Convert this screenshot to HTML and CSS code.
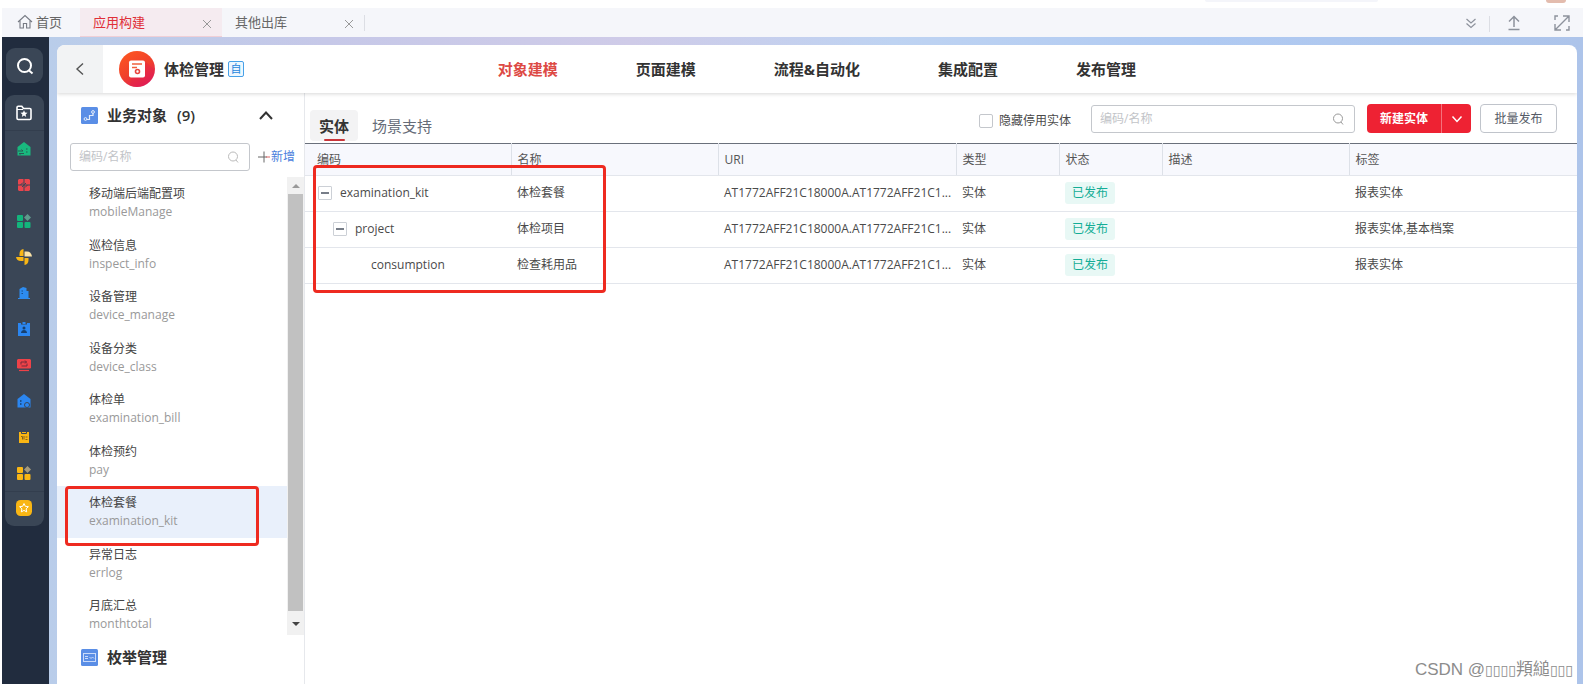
FILE: index.html
```html
<!DOCTYPE html>
<html lang="zh-CN">
<head>
<meta charset="utf-8">
<title>体检管理</title>
<link rel="stylesheet" href="styles.css">
</head>
<body>
<div class="app">
  <div class="topbar"><span class="topbar-search"></span><span class="topbar-avatar"></span></div>
  <nav class="tabs">
    <button class="tab tab-home">
      <svg class="ic16" viewBox="0 0 16 16" fill="none" stroke="#777b84" stroke-width="1.1"><path d="M1 8 8 1.5 15 8M3 6.8V14h3.4V9.500h3.200V14H13V6.800"/></svg>首页</button>
    <button class="tab active">应用构建<svg class="ic10" viewBox="0 0 10 10" stroke="#999" fill="none"><path d="M1 1l8 8M9 1 1 9"/></svg></button>
    <button class="tab">其他出库<svg class="ic10" viewBox="0 0 10 10" stroke="#999" fill="none"><path d="M1 1l8 8M9 1 1 9"/></svg></button>
    <span class="tab-sep"></span>
    <div class="tab-tools">
      <button aria-label="更多"><svg class="ic12" viewBox="0 0 12 12" fill="none" stroke="#8d929c" stroke-width="1.2"><path d="M1.500 2 6 6l4.500-4M1.500 6.500l4.500 4 4.500-4"/></svg></button>
      <span class="tool-sep"></span>
      <button aria-label="上传"><svg class="ic16" viewBox="0 0 16 16" fill="none" stroke="#8d929c" stroke-width="1.5"><path d="M8 12V2M3 6.500 8 1.500l5 5M2.500 14.500h11"/></svg></button>
      <button aria-label="全屏"><svg class="ic16" viewBox="0 0 16 16" fill="none" stroke="#8d929c" stroke-width="1.400"><path d="M1 5V1h3M15 11v4h-3M9 1h6v6M15 1 1 15M1 9v6h6"/></svg></button>
    </div>
  </nav>
  <div class="main">
    <aside class="rail">
      <button class="rail-search" aria-label="搜索"><svg class="ic18" viewBox="0 0 18 18" fill="none" stroke="#fff" stroke-width="2"><circle cx="8.500" cy="8.500" r="6.500"/><path d="m12.500 13 4 3.500"/></svg></button>
      <div class="rail-group">
        <button class="rail-item rail-first" aria-label="收藏夹"><svg class="ic16" viewBox="0 0 16 16" fill="none" stroke="#fff" stroke-width="1.600"><path d="M1 13V2.500C1 1.700 1.500 1.200 2.200 1.200h3.600L7.500 3.500h6.300c.7 0 1.200.5 1.200 1.200v8.600c0 .7-.5 1.200-1.200 1.200H2.200C1.500 14.500 1 14 1 13.300z"/><path d="M1 4.500h6" stroke-width="1"/><path d="m8 5.300 1 2.200 2.500.3-1.900 1.600.6 2.500L8 10.600l-2.200 1.300.6-2.500-1.900-1.600 2.500-.3z" fill="#fff" stroke="none"/></svg></button>
        <button class="rail-item" aria-label="房屋"><svg class="ic14" viewBox="0 0 14 14"><path d="M7 0 13.500 5v8.500H.5V5z" fill="#19b87e"/><path d="M1 9h5l-1.500-1.500M7 11.500H2l1.500 1.200M9 7h1.500M9 10h1.500" stroke="#2a5a55" fill="none"/></svg></button>
        <button class="rail-item" aria-label="组合"><svg class="ic12" viewBox="0 0 12 12"><path d="M1 0h4.500v5.500H0V1zM6.500 0H11l1 1v4.500H6.500zM0 6.500h5.500V12H1l-1-1zM6.500 6.500H12V11l-1 1H6.500z" fill="#e9454d"/><path d="M2.500 6 5 3.500M7 8.500 9.500 6M4 8l4-4" stroke="#3b4756" fill="none"/></svg></button>
        <button class="rail-item" aria-label="应用"><svg class="ic14" viewBox="0 0 14 14" fill="#13b57c"><rect x="0" y="1" width="6" height="6" rx="1"/><rect x="0" y="8" width="6" height="6" rx="1"/><rect x="7.500" y="8" width="6" height="6" rx="1"/><path d="M10.500 0 14 3.500 10.500 7 7 3.500z" fill="#5f9a8c"/></svg></button>
        <button class="rail-item" aria-label="风车"><svg class="ic16" viewBox="0 0 16 16" fill="#f9b614"><path d="M7.500 0v7H3.500V5C3.500 2 5 .5 7.500 0zM0 8h7.500v4H5C2 12 .5 10.500 0 8zM8.500 16V9h4v2c0 3-1.500 4.500-4 5z"/><path d="M16 7.500H8.500v-5H11c3 0 4.500 2 5 5z" fill="#fbe3a6"/></svg></button>
        <button class="rail-item" aria-label="楼宇"><svg class="ic12" viewBox="0 0 12 12"><path d="M1.500 11V2L5 0l3.500 1v3h2v7H12v1H0v-1z" fill="#2d8cf0"/><path d="M3.500 4h1.500M3.500 6.500h1.500" stroke="#1b4f8c"/></svg></button>
        <button class="rail-item" aria-label="人员"><svg class="ic14" viewBox="0 0 14 14"><path d="M1 1h12v13H1z" fill="#2b86f0"/><path d="M4 0h6v2.500H4z" fill="#3b4756"/><path d="M5.500 0h3v2h-3z" fill="#2b86f0"/><circle cx="7" cy="6" r="1.500" fill="#17406f"/><path d="M4 11c0-4 6-4 6 0z" fill="#17406f"/></svg></button>
        <button class="rail-item" aria-label="交易"><svg class="ic14" viewBox="0 0 14 14"><path d="M1 1h12l1 1v8l-1 .500H1L0 10V2z" fill="#ee4248"/><path d="M2 12.500h10" stroke="#ee4248" stroke-width="1.200"/><path d="M4 6.500V4h5.500M8 2.500 9.500 4 8 5.500M10 5.500V8H4.500" stroke="#722b3a" fill="none"/></svg></button>
        <button class="rail-item" aria-label="物业"><svg class="ic14" viewBox="0 0 14 14"><path d="M7 0 13.500 5v8.500H.5V5z" fill="#2b86f0"/><path d="M3 7h1.500M3 10h1.500" stroke="#17406f" stroke-width="1.500"/><circle cx="10" cy="11" r="2.500" fill="#2b86f0" stroke="#3b4756"/></svg></button>
        <button class="rail-item" aria-label="日历"><svg class="ic12" viewBox="0 0 12 12"><path d="M1 1h10v11H1z" fill="#f9b614"/><path d="M3.500 0v2.500h5V0" stroke="#3b4756" fill="none"/><path d="M3 5.500h1.500v3M6 5v3.500M7.500 8.500h2M7.500 6h2" stroke="#85631c" fill="none"/></svg></button>
        <button class="rail-item" aria-label="应用二"><svg class="ic14" viewBox="0 0 14 14" fill="#f9b614"><rect x="0" y="1" width="6" height="6" rx="1"/><rect x="0" y="8" width="6" height="6" rx="1"/><rect x="7.500" y="8" width="6" height="6" rx="1"/><path d="M10.500 0 14 3.500 10.500 7 7 3.500z" fill="#a59a7c"/></svg></button>
        <button class="rail-item rail-last" aria-label="星标"><svg class="ic16" viewBox="0 0 16 16"><rect width="16" height="16" rx="4.500" fill="#f9b614"/><path d="m8 3.500 1.300 2.800 3.100.4-2.300 2.100.6 3.100L8 10.400l-2.700 1.500.6-3.100-2.300-2.100 3.100-.4z" fill="none" stroke="#fff"/></svg></button>
      </div>
    </aside>
    <div class="stage">
      <div class="card">
        <header class="head">
          <button class="back" aria-label="返回"><svg class="ic14" viewBox="0 0 14 14" fill="none" stroke="#555" stroke-width="1.400"><path d="M10 1.500 4 7l6 5.500"/></svg></button>
          <svg class="logo" viewBox="0 0 36 36"><defs><linearGradient id="lg" x1="0" y1="0" x2="0.600" y2="1"><stop offset="0" stop-color="#ff5a1f"/><stop offset=".6" stop-color="#f0402c"/><stop offset="1" stop-color="#e01e55"/></linearGradient></defs><circle cx="18" cy="18" r="18" fill="url(#lg)"/><path d="m12 27 14-17 9 9c-1 8-8 16-17 17-3 0-5-1-7-2z" fill="#e3204e" opacity=".4"/><rect x="10" y="9.500" width="16" height="17" rx="2" fill="#fff"/><path d="M13 13h10M13 16.500h5" stroke="#f0603c" stroke-width="1.400"/><circle cx="18.500" cy="20.500" r="2" fill="none" stroke="#e8453c" stroke-width="1.600"/></svg>
          <h1>体检管理</h1><span class="badge">自</span>
          <nav class="nav"><a href="#" class="on">对象建模</a><a href="#">页面建模</a><a href="#">流程&amp;自动化</a><a href="#">集成配置</a><a href="#">发布管理</a></nav>
        </header>
        <div class="body">
          <section class="side">
            <div class="side-title">
              <svg class="ic17" viewBox="0 0 17 17"><rect width="17" height="17" rx="1.500" fill="#5a8ee6"/><path d="M5.800 12.500H8.500v-4H12V6.500" fill="none" stroke="#e4edfb" stroke-width="1.200"/><circle cx="4.500" cy="12" r="1.400" fill="none" stroke="#e4edfb"/><circle cx="12" cy="5" r="1.400" fill="none" stroke="#e4edfb"/></svg>
              <h2>业务对象<span class="count">(9)</span></h2>
              <button aria-label="收起"><svg class="ic14" viewBox="0 0 14 14" fill="none" stroke="#333" stroke-width="2"><path d="m1 11 6-6.500L13 11"/></svg></button>
            </div>
            <div class="side-search">
              <label class="field"><input type="text" placeholder="编码/名称" aria-label="编码/名称"><svg class="ic12" viewBox="0 0 12 12" fill="none" stroke="#bbb"><circle cx="6" cy="5.500" r="4.500"/><path d="m9 9 2 2.500"/></svg></label>
              <button class="add"><svg class="ic12" viewBox="0 0 12 12" stroke="#666"><path d="M0 6h9M6 .5v11"/><path d="M8 6h4" stroke="#d66"/></svg>新增</button>
            </div>
            <div class="list-wrap">
              <ul class="list">
                <li><b>移动端后端配置项</b><i>mobileManage</i></li>
                <li><b>巡检信息</b><i>inspect_info</i></li>
                <li><b>设备管理</b><i>device_manage</i></li>
                <li><b>设备分类</b><i>device_class</i></li>
                <li><b>体检单</b><i>examination_bill</i></li>
                <li><b>体检预约</b><i>pay</i></li>
                <li class="sel"><b>体检套餐</b><i>examination_kit</i><span class="mark mark-item"></span></li>
                <li><b>异常日志</b><i>errlog</i></li>
                <li><b>月底汇总</b><i>monthtotal</i></li>
              </ul>
              <div class="scroll"><span class="up"></span><span class="thumb"></span><span class="down"></span></div>
            </div>
            <div class="side-title side-enum">
              <svg class="ic17" viewBox="0 0 17 17"><rect width="17" height="17" rx="1.500" fill="#5a8ee6"/><rect x="2.500" y="4.500" width="12" height="8" fill="none" stroke="#c9dafa"/><path d="M4 7.500h3M4 9.500h3M8.500 8l1.500 1.500L11.500 8l1.500 1.500" fill="none" stroke="#c9dafa"/></svg>
              <h2>枚举管理</h2>
            </div>
          </section>
          <section class="content">
            <div class="toolbar">
              <button class="subtab on">实体</button><button class="subtab">场景支持</button>
              <div class="actions">
                <label class="check"><input type="checkbox">隐藏停用实体</label>
                <label class="field wide"><input type="text" placeholder="编码/名称" aria-label="搜索实体"><svg class="ic12" viewBox="0 0 12 12" fill="none" stroke="#999"><circle cx="6" cy="5.500" r="4.500"/><path d="m9 9 2 2.500"/></svg></label>
                <div class="split"><button>新建实体</button><button aria-label="更多操作"><svg class="ic12" viewBox="0 0 12 12" fill="none" stroke="#fff" stroke-width="1.500"><path d="m1.500 3.500 4.500 5 4.500-5"/></svg></button></div>
                <button class="ghost">批量发布</button>
              </div>
            </div>
            <div class="table-wrap">
              <table>
                <colgroup><col class="c-code"><col class="c-name"><col class="c-uri"><col class="c-type"><col class="c-type"><col class="c-desc"><col></colgroup>
                <thead><tr><th>编码</th><th>名称</th><th>URI</th><th>类型</th><th>状态</th><th>描述</th><th>标签</th></tr></thead>
                <tbody>
                  <tr><td><div class="tree"><button class="fold" aria-label="折叠"></button>examination_kit</div></td><td>体检套餐</td><td>AT1772AFF21C18000A.AT1772AFF21C1...</td><td>实体</td><td><span class="tag">已发布</span></td><td></td><td>报表实体</td></tr>
                  <tr><td><div class="tree l1"><button class="fold" aria-label="折叠"></button>project</div></td><td>体检项目</td><td>AT1772AFF21C18000A.AT1772AFF21C1...</td><td>实体</td><td><span class="tag">已发布</span></td><td></td><td>报表实体,基本档案</td></tr>
                  <tr><td><div class="tree l2">consumption</div></td><td>检查耗用品</td><td>AT1772AFF21C18000A.AT1772AFF21C1...</td><td>实体</td><td><span class="tag">已发布</span></td><td></td><td>报表实体</td></tr>
                </tbody>
              </table>
              <span class="mark mark-table"></span>
            </div>
          </section>
        </div>
      </div>
    </div>
  </div>
  <div class="watermark">CSDN @<span>▯▯▯▯</span>頖縋<span>▯▯▯</span></div>
</div>
</body>
</html>
```
FILE: styles.css
```css
* { box-sizing: border-box; }
body {
  margin: 0;
  background: #fff;
  color: #4a4a4a;
  font: 12px/18px "Open Sans", "Noto Sans CJK SC", sans-serif;
}
button { border: 0; padding: 0; background: none; font: inherit; color: inherit; display: flex; align-items: center; }
input { font: inherit; margin: 0; }
a { color: inherit; text-decoration: none; }
h1, h2 { margin: 0; font-size: 15px; line-height: 22px; color: #333; font-weight: 700; }
svg { flex: none; display: block; }
.ic10 { width: 10px; height: 10px; }
.ic12 { width: 12px; height: 12px; }
.ic14 { width: 14px; height: 14px; }
.ic16 { width: 16px; height: 16px; }
.ic17 { width: 17px; height: 17px; }
.ic18 { width: 18px; height: 18px; }

.app { position: relative; min-height: 100vh; display: flex; flex-direction: column; padding: 0 4px 4px 2px; }

.topbar { height: 8px; display: flex; align-items: flex-start; justify-content: flex-end; padding-right: 17px; gap: 168px; }
.topbar-search { width: 173px; height: 2px; background: #f4f5fa; border-radius: 0 0 4px 4px; }
.topbar-avatar { width: 20px; height: 3px; background: #e3bcae; border-radius: 0 0 10px 10px; }

.tabs { height: 29px; display: flex; align-items: stretch; background: #f5f6fa; color: #666; font-size: 13px; }
.tab { width: 142px; padding: 0 10px 2px 13px; justify-content: space-between; }
.tab .ic10 { margin-top: 5px; }
.tab-home { width: 78px; padding-left: 15px; padding-right: 0; gap: 3px; justify-content: flex-start; }
.tab.active { background: #f5ebf0; color: #e02f38; border-bottom: 1px solid #f0cfd6; padding-bottom: 1px; }
.tab-sep, .tool-sep { width: 1px; height: 16px; background: #dcdee4; align-self: center; }
.tab-tools { margin-left: auto; display: flex; align-items: center; padding-right: 13px; gap: 32px; }
.tab-tools .tool-sep { margin: 0 -16px -2px -20px; }

.main { flex: 1; display: flex; }
.rail { width: 47px; background: #212c3e; padding: 11px 5px 0 3px; }
.rail button { justify-content: center; }
.rail-search { width: 37px; height: 35px; margin-left: 1px; background: #3a4656; border-radius: 9px; }
.rail-group { margin-top: 12px; background: #3a4656; border-radius: 9px; padding-bottom: 2px; }
.rail-item { width: 100%; height: 36px; padding-right: 1px; }
.rail-first { border-bottom: 1px solid #333e4e; }
.rail-last { height: 33px; border-top: 1px solid #333e4e; }

.stage { flex: 1; min-width: 0; display: flex; padding: 8px 6px 0 8px; background: linear-gradient(90deg, #b9cdea 0%, #c6c8e8 18%, #cfcbe8 38%, #bed3f2 55%, #b0caf2 75%, #adc4ea 100%); }
.card { flex: 1; min-width: 0; display: flex; flex-direction: column; background: #fff; border-radius: 8px 8px 0 0; overflow: hidden; }
.head { position: relative; height: 48px; display: flex; align-items: center; box-shadow: 0 1px 4px rgba(0, 0, 0, .16); }
.back { width: 46px; height: 100%; justify-content: center; background: #f2f3f4; }
.logo { width: 36px; height: 36px; margin: 0 9px 0 16px; }
.badge { margin-left: 4px; width: 16px; height: 16px; border: 1px solid #47a1e8; border-radius: 2px; color: #1f86dc; background: #edf7ff; font-size: 11px; line-height: 14px; text-align: center; }
.nav { position: absolute; left: 29%; display: flex; gap: 78px; font-size: 15px; font-weight: 700; color: #333; }
.nav .on { color: #dd4a45; }

.body { flex: 1; display: flex; }
.side { width: 248px; border-right: 1px solid #e6e8ec; display: flex; flex-direction: column; }
.side-title { display: flex; align-items: center; height: 44px; padding: 0 31px 0 24px; gap: 9px; }
.side-title button { margin-left: auto; }
.count { margin-left: 10px; font-weight: 600; }
.side-search { display: flex; align-items: center; gap: 8px; padding: 6px 7px 4px 13px; }
.field { display: flex; align-items: center; height: 28px; border: 1px solid #c4c7cc; border-radius: 3px; padding: 0 10px 0 8px; background: #fff; width: 180px; }
.field input { flex: 1; min-width: 0; border: 0; outline: 0; padding: 0; background: none; }
.field input::placeholder { color: #c2c4c8; }
.add { color: #4a80dd; white-space: nowrap; gap: 1px; }
.list-wrap { display: flex; height: 458px; margin-top: 2px; }
.list { flex: 1; height: 464px; margin: 0; padding: 0; list-style: none; display: grid; grid-template-rows: repeat(9, 1fr); }
.list li { position: relative; padding: 8px 0 0 32px; display: flex; flex-direction: column; color: #444; }
.list b { font-weight: 400; }
.list i { font-style: normal; color: #999; }
.list .sel { background: #e9f0fb; }
.scroll { width: 17px; background: #f1f1f1; display: flex; flex-direction: column; align-items: center; }
.up, .down { width: 0; height: 0; border: 4px solid transparent; }
.up { margin: 3px 0 6px; border-bottom-color: #999; }
.thumb { flex: 1; width: 15px; background: #c1c1c1; }
.down { margin: 11px 0 5px; border-top-color: #444; }

.content { flex: 1; min-width: 0; }
.toolbar { display: flex; align-items: flex-end; height: 50px; padding: 0 20px 2px 5px; font-size: 15px; }
.subtab { position: relative; height: 31px; padding: 0 14px; color: #666c78; }
.subtab.on { width: 48px; padding: 0; justify-content: center; background: #f3f3f4; border-radius: 4px; color: #333; font-weight: 700; }
.subtab.on::after { content: ""; position: absolute; left: 14px; bottom: 0; width: 21px; height: 2px; background: #c9353a; border-radius: 1px; }
.actions { margin: 0 0 8px auto; display: flex; align-items: center; font-size: 12px; }
.check { display: flex; align-items: center; gap: 6px; margin: 4px 20px 0 0; }
.check input { appearance: none; width: 14px; height: 14px; border: 1px solid #c4c7cc; border-radius: 2px; background: #fff; }
.wide { width: 264px; margin-right: 12px; }
.split { display: flex; height: 29px; background: #ee2233; border-radius: 4px; color: #fff; font-weight: 700; margin-right: 9px; }
.split button { width: 74px; justify-content: center; }
.split button + button { width: 30px; border-left: 1px solid #f4727c; }
.ghost { width: 77px; height: 29px; justify-content: center; border: 1px solid #c0c4cb; border-radius: 4px; color: #555b66; }

.table-wrap { position: relative; }
table { width: 100%; table-layout: fixed; border-collapse: collapse; border-top: 1px solid #6a707b; }
.c-code { width: 206px; }
.c-name { width: 207px; }
.c-uri { width: 238px; }
.c-type { width: 103px; }
.c-desc { width: 187px; }
th, td { text-align: left; font-weight: 400; padding: 0 6px; white-space: nowrap; border-bottom: 1px solid #e3e6ec; }
th { height: 32px; background: #f7f8fd; color: #555; border-right: 1px solid #dde1e8; }
th:first-child { padding-left: 12px; }
th:last-child { border-right: 0; }
td { height: 36px; padding-bottom: 1px; }
.tree { display: flex; align-items: center; gap: 8px; padding-left: 7px; }
.l1 { padding-left: 22px; }
.l2 { padding-left: 60px; }
.fold { width: 14px; height: 14px; justify-content: center; border: 1px solid #ccd0d6; border-radius: 1px; }
.fold::before { content: ""; width: 8px; height: 2px; background: #777d88; }
.tag { display: inline-block; padding: 2px 7px; border-radius: 3px; background: #e8f8f5; color: #14ad96; }

.mark { position: absolute; border: 3px solid #ee2a20; border-radius: 4px; pointer-events: none; z-index: 2; }
.mark-item { left: 8px; top: 0; width: 194px; height: 60px; }
.mark-table { left: 8px; top: 22px; width: 293px; height: 128px; }
.watermark { position: absolute; right: 14px; bottom: 7px; font: 17px/22px "Liberation Sans", "Noto Sans CJK TC", sans-serif; color: #8c8c8c; }
.watermark span { font-family: "DejaVu Sans", sans-serif; font-size: 14px; }
```
